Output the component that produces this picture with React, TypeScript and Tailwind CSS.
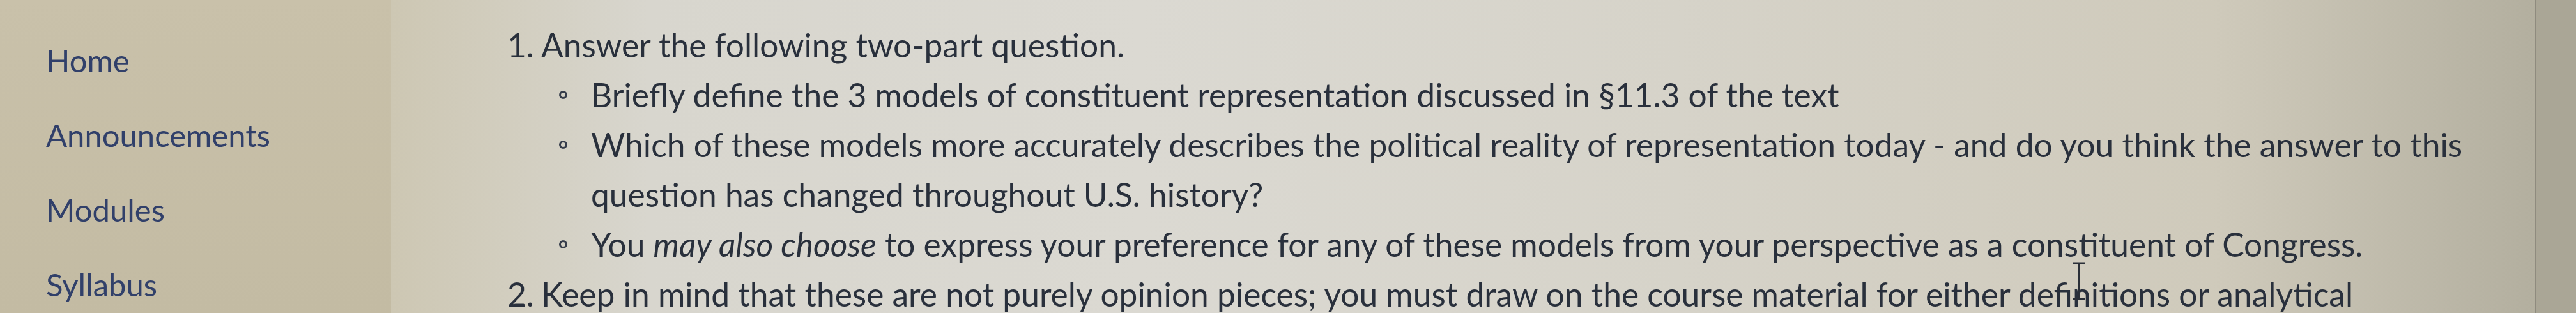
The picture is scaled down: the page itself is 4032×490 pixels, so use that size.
import React from 'react';

const navItems = ['Home', 'Announcements', 'Modules', 'Syllabus'];

const Bullet: React.FC = () => (
  <span className="mt-[33px] ml-[28px] mr-[37px] h-[13px] w-[13px] shrink-0 rounded-full border-[3px] border-[#363d4b]" />
);

const App: React.FC = () => {
  return (
    <div className="flex h-[490px] w-[4032px] overflow-hidden font-['Lato','Open_Sans',sans-serif] leading-[78px]">
      {/* course nav */}
      <nav className="w-[612px] shrink-0 bg-[linear-gradient(to_bottom,#c9c1aa,#c3bba3)] pt-[35px] pl-[72px] text-[49px] text-[#31406a]">
        {navItems.map((item) => (
          <a key={item} href="#" className="flex h-[117px] items-center">
            {item}
          </a>
        ))}
      </nav>

      {/* page content */}
      <main className="relative flex-1 border-r-2 border-[#8f8b7e] bg-[linear-gradient(to_right,#cdc7b3,#d8d6ce_12%,#dbd9d2_35%,#d6d3c9_60%,#cfcabb_85%,#b3af9f)] pt-[31px] pl-[182px] pr-[60px] text-[51.5px] text-[#29303c]">
        <ol>
          <li className="flex">
            <span className="w-[53px] shrink-0">1.</span>
            <div>
              <p>Answer the following two-part question.</p>
              <ul>
                <li className="flex">
                  <Bullet />
                  <span>Briefly define the 3 models of constituent representation discussed in §11.3 of the text</span>
                </li>
                <li className="flex">
                  <Bullet />
                  <span>
                    Which of these models more accurately describes the political reality of representation today - and do you think the answer to this question has changed throughout U.S. history?
                  </span>
                </li>
                <li className="flex">
                  <Bullet />
                  <span>
                    You <em>may also choose</em> to express your preference for any of these models from your perspective as a constituent of Congress.
                  </span>
                </li>
              </ul>
            </div>
          </li>
          <li className="mt-[9px] flex leading-[60px]">
            <span className="w-[53px] shrink-0">2.</span>
            <p className="whitespace-nowrap">
              Keep in mind that these are not purely opinion pieces; you must draw on the course material for either definitions or analytical
            </p>
          </li>
        </ol>

        {/* mouse text cursor */}
        <svg className="absolute left-[2631px] top-[410px]" width="22" height="60" viewBox="0 0 22 60">
          <path d="M2 2h18M11 2v56M2 58h18" stroke="#2a2f38" strokeWidth="3" fill="none" />
        </svg>
      </main>

      <div className="w-[62px] shrink-0 bg-[#aaa696]" />
    </div>
  );
};

export default App;
